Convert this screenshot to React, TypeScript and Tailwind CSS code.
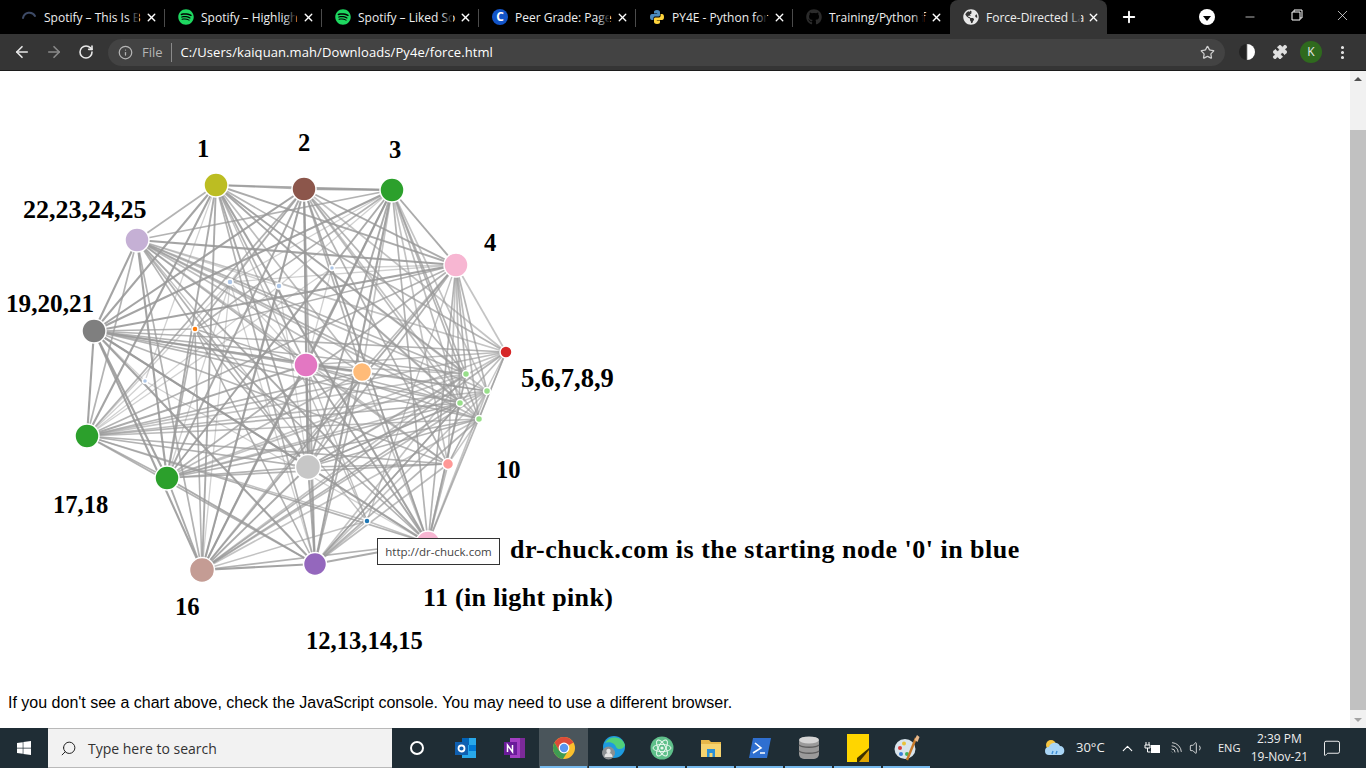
import { ArrowLeft, ArrowRight, RotateCw, Info, Star, Puzzle, MoreVertical, Plus, X, Minus, ChevronUp, Search, Wifi, Volume1, MessageSquare } from 'lucide-react';
import { FaSpotify, FaGithub, FaWindows, FaGlobeAmericas } from 'react-icons/fa';
import type { ReactNode } from 'react';

const nodes: [number, number, number, string][] = [
  [216, 185, 12, '#bcbd22'],
  [304, 189, 12, '#8c564b'],
  [392, 190, 12, '#2ca02c'],
  [456, 265, 12, '#f7b6d2'],
  [506, 352, 6, '#d62728'],
  [466, 374, 3.5, '#98df8a'],
  [487, 391, 3.5, '#98df8a'],
  [460, 403, 3.5, '#98df8a'],
  [479, 419, 3.5, '#98df8a'],
  [448, 464, 5.5, '#ff9896'],
  [428, 543, 12, '#f7b6d2'],
  [367, 521, 3, '#1f77b4'],
  [315, 564, 11.5, '#9467bd'],
  [202, 570, 12.5, '#c49c94'],
  [167, 478, 12, '#2ca02c'],
  [87, 436, 12, '#2ca02c'],
  [94, 331, 12, '#7f7f7f'],
  [137, 240, 12, '#c5b0d5'],
  [195, 329, 3, '#ff7f0e'],
  [230, 282, 3, '#aec7e8'],
  [279, 286, 3, '#aec7e8'],
  [332, 268, 2.5, '#aec7e8'],
  [145, 381, 2.5, '#aec7e8'],
  [306, 365, 12, '#e377c2'],
  [362, 372, 9.5, '#ffbb78'],
  [308, 467, 12.5, '#c7c7c7'],
];

// s = big hub, m = mid node with many lighter links, f = faint dot
const kinds = 'ssssmmmmmmsbssssssoffffsms';

const links: { a: number; b: number; w: number; o: number }[] = [];
nodes.forEach((_, i) => {
  nodes.forEach((_, j) => {
    if (j <= i) return;
    const pair = [kinds[i], kinds[j]].sort().join('');
    const h = (i * 31 + j * 17 + i * j * 7) % 11;
    if (pair === 'ss') {
      if (h < 10) links.push({ a: i, b: j, w: 1.7 + (h % 3) * 0.2, o: 0.75 + (h % 3) * 0.07 });
    } else if (pair === 'ms') {
      if (h < 10) links.push({ a: i, b: j, w: 1.7, o: 0.58 + (h % 3) * 0.07 });
    } else if (pair === 'mm') {
      if (h < 5) links.push({ a: i, b: j, w: 1.4, o: 0.55 });
    } else if (pair === 'os') {
      if (h < 9) links.push({ a: i, b: j, w: 1.6, o: 0.75 });
    } else if (pair === 'bs') {
      if (h < 7) links.push({ a: i, b: j, w: 1.4, o: 0.6 });
    } else if (pair === 'fs') {
      if (h < 4) links.push({ a: i, b: j, w: 1.3, o: 0.45 });
    }
  });
});

const labels: [number, number, string, string][] = [
  [197, 149, '1', 'text-[24.6px]'],
  [298, 143, '2', 'text-[24.6px]'],
  [389, 150, '3', 'text-[24.6px]'],
  [484, 243, '4', 'text-[24.6px]'],
  [521, 378, '5,6,7,8,9', 'text-[26.5px]'],
  [496, 470, '10', 'text-[24.6px]'],
  [423, 598, '11 (in light pink)', 'text-[26px] tracking-[0.33px]'],
  [306, 641, '12,13,14,15', 'text-[24.6px]'],
  [175, 607, '16', 'text-[24.6px]'],
  [53, 505, '17,18', 'text-[24.6px]'],
  [6, 304, '19,20,21', 'text-[25.2px]'],
  [23, 210, '22,23,24,25', 'text-[26px]'],
  [510, 550, "dr-chuck.com is the starting node '0' in blue", 'text-[26px] tracking-[0.5px]'],
];

function ChromeLogo({ size = 24 }: { size?: number }) {
  return (
    <svg width={size} height={size} viewBox="0 0 24 24">
      <circle cx="12" cy="12" r="11" fill="#fbc02d" />
      <path d="M12 12 L21.5 6.5 A11 11 0 0 0 2.5 6.5 L7.2 15 Z" fill="#dd4b39" />
      <path d="M12 12 L7.2 15 L2.5 6.5 A11 11 0 0 0 11 23 L16 15 Z" fill="#3f9b52" />
      <circle cx="12" cy="12" r="5.4" fill="#fff" />
      <circle cx="12" cy="12" r="4.2" fill="#5a95ee" />
    </svg>
  );
}

function PythonLogo() {
  return (
    <svg width="16" height="16" viewBox="0 0 16 16">
      <path d="M8 1C5.5 1 5 2 5 3v1.5h3.2V5H3C1.6 5 1 6.2 1 8s.7 3 2 3h1.4V9.2C4.4 8 5.3 7.4 6.4 7.4h3.2c.9 0 1.4-.6 1.4-1.4V3c0-1.2-1.3-2-3-2Z" fill="#4b8bbe" />
      <path d="M8 15c2.5 0 3-1 3-2v-1.5H7.8V11H13c1.400 0 2-1.200 2-3s-.7-3-2-3h-1.400v1.800c0 1.200-.9 1.800-2 1.800H6.400C5.500 8.600 5 9.200 5 10v3c0 1.200 1.300 2 3 2Z" fill="#ffd43b" />
    </svg>
  );
}

function Tab({ icon, title, sep = true, active = false }: { icon: ReactNode; title: string; sep?: boolean; active?: boolean }) {
  return (
    <div className={`relative flex h-[34px] w-[157px] shrink-0 items-center pl-[13px] pr-[7px] ${active ? 'rounded-t-lg bg-[#353535]' : ''}`}>
      <span className="flex w-[23px] shrink-0 items-center">{icon}</span>
      <span className="relative min-w-0 flex-1 whitespace-nowrap pt-px text-[12px] text-[#eeeeee]">
        {title}
        <span className={`absolute inset-y-0 right-0 w-3 bg-gradient-to-r from-transparent ${active ? 'to-[#353535]' : 'to-black'}`} />
      </span>
      <X size={13} strokeWidth={2.5} className="ml-[6px] shrink-0 text-white" />
      {sep && <span className="absolute right-0 top-[9px] h-[18px] w-px bg-[#4b4b4b]" />}
    </div>
  );
}

function CBadge() {
  return (
    <span className="flex h-4 w-4 items-center justify-center rounded-full bg-[#1254c8] text-[12px] font-bold leading-none text-white">
      C
    </span>
  );
}

function SpinnerIcon() {
  return (
    <svg width="16" height="16" viewBox="0 0 16 16" fill="none">
      <path d="M2 9 A6.5 6.5 0 0 1 14 7" stroke="#3d4a66" strokeWidth="2" strokeLinecap="round" />
    </svg>
  );
}

function TaskIcon({ children, run = true, active = false }: { children: ReactNode; run?: boolean; active?: boolean }) {
  return (
    <div className={`relative flex h-10 w-[49px] shrink-0 items-center justify-center ${active ? 'bg-[#4a555b]' : ''}`}>
      {children}
      {run && <span className="absolute inset-x-[1px] bottom-0 h-[2px] bg-[#76b9ed]" />}
    </div>
  );
}

function Taskbar() {
  return (
    <div className="flex h-10 shrink-0 items-center bg-[#1f2d35] text-white" style={{ fontFamily: '"Open Sans", sans-serif' }}>
      <div className="flex h-10 w-12 items-center justify-center">
        <FaWindows size={16} />
      </div>
      <div className="flex h-10 w-[344px] items-center border-y border-[#b9b9b9] bg-[#f2f2f2] pl-[12px] text-[14px] text-[#333]">
        <Search size={17} strokeWidth={1.4} className="-scale-x-100 text-[#222]" />
        <span className="ml-[11px]">Type here to search</span>
      </div>
      <TaskIcon run={false}>
        <span className="h-[14px] w-[14px] rounded-full border-2 border-white" />
      </TaskIcon>
      <TaskIcon run={false}>
        <svg width="24" height="24" viewBox="0 0 24 24">
          <rect x="8" y="2" width="14" height="20" fill="#28a8ea" />
          <rect x="8" y="2" width="7" height="7" fill="#0364b8" />
          <rect x="15" y="9" width="7" height="6" fill="#0078d4" />
          <rect x="1" y="6" width="13" height="13" fill="#0f5fb0" />
          <circle cx="7.5" cy="12.5" r="3" fill="none" stroke="#fff" strokeWidth="1.8" />
        </svg>
      </TaskIcon>
      <TaskIcon run={false}>
        <svg width="24" height="24" viewBox="0 0 24 24">
          <rect x="7" y="2" width="15" height="20" fill="#a33fc4" />
          <rect x="17" y="2" width="5" height="20" fill="#7c2a99" />
          <rect x="1" y="6" width="13" height="13" fill="#6a1b9a" />
          <path d="M4.5 16V9l5 7V9" fill="none" stroke="#fff" strokeWidth="1.5" />
        </svg>
      </TaskIcon>
      <TaskIcon active>
        <ChromeLogo />
      </TaskIcon>
      <TaskIcon>
        <svg width="26" height="26" viewBox="0 0 26 26">
          <circle cx="14" cy="12" r="11" fill="#1e9be0" />
          <path d="M5 8 A11 11 0 0 1 25 10 C24 15 17 15 16 12 C15 8 9 6 5 8Z" fill="#50d07a" />
          <circle cx="8.5" cy="18" r="6.5" fill="#8b8f92" />
          <circle cx="8.5" cy="16" r="2.2" fill="#e4e4e4" />
          <path d="M4.5 22 A4 4 0 0 1 12.5 22Z" fill="#e4e4e4" />
        </svg>
      </TaskIcon>
      <TaskIcon>
        <svg width="26" height="26" viewBox="0 0 26 26" fill="none">
          <circle cx="13" cy="13" r="11.5" fill="#5fbf8a" />
          <ellipse cx="13" cy="13" rx="9" ry="3.6" stroke="#e8f8ee" strokeWidth="1" transform="rotate(60 13 13)" />
          <ellipse cx="13" cy="13" rx="9" ry="3.6" stroke="#e8f8ee" strokeWidth="1" transform="rotate(-60 13 13)" />
          <ellipse cx="13" cy="13" rx="9" ry="3.6" stroke="#e8f8ee" strokeWidth="1" />
          <circle cx="13" cy="13" r="1.6" fill="#e8f8ee" />
        </svg>
      </TaskIcon>
      <TaskIcon>
        <svg width="24" height="24" viewBox="0 0 24 24">
          <path d="M2 4h8l2 2h10v15H2Z" fill="#e8b84a" />
          <rect x="2" y="8" width="20" height="13" fill="#f6d36f" />
          <rect x="8" y="13" width="8" height="8" fill="#2b8fd6" />
          <rect x="10.5" y="17" width="3" height="4" fill="#f6d36f" />
        </svg>
      </TaskIcon>
      <TaskIcon>
        <svg width="24" height="24" viewBox="0 0 24 24">
          <path d="M5 2h18l-4 20H1Z" fill="#2f6fd0" />
          <path d="M7 7l6 5-8 5M12 17h5" fill="none" stroke="#fff" strokeWidth="1.6" />
        </svg>
      </TaskIcon>
      <TaskIcon>
        <svg width="24" height="26" viewBox="0 0 24 26">
          <rect x="2" y="2" width="20" height="22" rx="5" fill="#9a9a9a" />
          <ellipse cx="12" cy="5" rx="10" ry="3.4" fill="#d4d4d4" />
          <path d="M2 10c3 3 17 3 20 0M2 16c3 3 17 3 20 0" fill="none" stroke="#5e5e5e" strokeWidth="1.4" />
        </svg>
      </TaskIcon>
      <TaskIcon>
        <svg width="22" height="28" viewBox="0 0 22 28">
          <rect width="22" height="28" fill="#ffd500" />
          <path d="M22 14v14H10V24Z" fill="#3b3000" />
          <path d="M22 16 12 28h10Z" fill="#e0a500" />
        </svg>
      </TaskIcon>
      <TaskIcon>
        <svg width="28" height="28" viewBox="0 0 28 28">
          <ellipse cx="12" cy="15" rx="10.5" ry="10" fill="#d8e4ec" />
          <circle cx="7" cy="14" r="2" fill="#d93a3a" />
          <circle cx="11" cy="9.5" r="2" fill="#e8c33a" />
          <circle cx="8" cy="20" r="2" fill="#3a7fd9" />
          <circle cx="14" cy="20" r="2" fill="#3fb35a" />
          <path d="M14 26 23 4" stroke="#c77a2a" strokeWidth="2.4" />
          <path d="M21.5 6 24 1l2.5 2-2 5Z" fill="#e8b88a" />
        </svg>
      </TaskIcon>
      <div className="ml-[115px] flex items-center">
        <svg width="22" height="20" viewBox="0 0 22 20" className="-ml-[2px]">
          <circle cx="7" cy="7" r="5" fill="#f5c542" />
          <path d="M5 17a4 4 0 0 1 0-8 6 6 0 0 1 11-1 4.6 4.6 0 0 1 1 9Z" fill="#a9d5f5" />
          <path d="M9 13l-1 3M13 13l-1 3" stroke="#3f8fd6" strokeWidth="1.4" />
        </svg>
        <span className="ml-[10px] w-[42px] text-[13px] text-[#eee]">30°C</span>
        <ChevronUp size={17} strokeWidth={1.6} className="ml-[1px]" />
        <svg width="17" height="14" viewBox="0 0 17 14" fill="none" className="ml-[8px]">
          <path d="M2 1v3M5 1v3M1 4h5v3H1ZM3.5 7v4h3" stroke="#fff" strokeWidth="1" />
          <rect x="7" y="4" width="9" height="8" fill="#fff" />
        </svg>
        <Wifi size={15} strokeWidth={1.4} className="ml-[7px] rotate-45 text-[#ddd]" />
        <Volume1 size={16} strokeWidth={1.3} className="ml-[6px] text-[#eee]" />
        <span className="ml-[13px] text-[11px] text-[#eee]">ENG</span>
        <div className="ml-[8px] flex w-[62px] flex-col items-center text-[12px] leading-[18px] text-[#eee]">
          <span>2:39 PM</span>
          <span>19-Nov-21</span>
        </div>
        <MessageSquare size={18} strokeWidth={1.2} className="ml-[13px]" />
      </div>
    </div>
  );
}

function Chrome() {
  return (
    <div className="shrink-0 bg-black" style={{ fontFamily: '"Open Sans", sans-serif' }}>
      <div className="flex h-[34px] items-center pl-[8px] text-white">
        <Tab icon={<SpinnerIcon />} title="Spotify – This Is B" />
        <Tab icon={<FaSpotify size={16} className="text-[#1ed760]" />} title="Spotify – Highligh" />
        <Tab icon={<FaSpotify size={16} className="text-[#1ed760]" />} title="Spotify – Liked So" />
        <Tab icon={<CBadge />} title="Peer Grade: Page" />
        <Tab icon={<PythonLogo />} title="PY4E - Python for" />
        <Tab icon={<FaGithub size={16} className="text-[#2b2b2b]" />} title="Training/Python f" sep={false} />
        <Tab icon={<FaGlobeAmericas size={16} className="text-[#e8e8e8]" />} title="Force-Directed La" sep={false} active />
        <Plus size={18} strokeWidth={2.5} className="ml-[13px]" />
        <span className="ml-[61px] flex h-4 w-4 items-center justify-center rounded-full bg-white">
          <span className="mt-[3px] border-x-[4px] border-t-[5px] border-x-transparent border-t-black" />
        </span>
        <Minus size={14} strokeWidth={1.2} className="ml-[28px]" />
        <svg width="12" height="12" viewBox="0 0 12 12" fill="none" stroke="#fff" className="ml-[34px] -mt-1">
          <path d="M3 3V1h8v8H9M1 3h8v8H1Z" />
        </svg>
        <X size={17} strokeWidth={1} className="ml-[31px] -mt-1" />
      </div>
      <div className="flex h-[37px] items-center border-b border-[#1c1c1c] bg-[#353535] text-[#e8e8e8]">
        <ArrowLeft size={18} strokeWidth={2.2} className="ml-[13px]" />
        <ArrowRight size={18} strokeWidth={2.2} className="ml-[14px] text-[#8a8a8a]" />
        <RotateCw size={16} strokeWidth={2.4} className="ml-[15px]" />
        <div className="ml-[14px] flex h-[27px] w-[1117px] items-center rounded-full bg-[#434343] pl-[10px] pr-[10px] text-[13px]">
          <Info size={15} className="text-[#b5b5b5]" />
          <span className="ml-[9px] pt-px text-[#b5b5b5]">File</span>
          <span className="ml-[8px] mr-[9px] h-[19px] w-px bg-[#8a8a8a]" />
          <span className="pt-px tracking-[0.09px] text-white">C:/Users/kaiquan.mah/Downloads/Py4e/force.html</span>
          <Star size={15} className="ml-auto text-[#cfcfcf]" />
        </div>
        <span className="ml-[14px] h-4 w-4 rounded-full bg-gradient-to-r from-[#222] from-45% to-white to-55%" />
        <Puzzle size={16} fill="#e0e0e0" strokeWidth={1} className="ml-[17px]" />
        <span className="ml-[12px] flex h-[22px] w-[22px] items-center justify-center rounded-full bg-[#2f6a1e] text-[12px]">K</span>
        <MoreVertical size={17} strokeWidth={2.4} className="ml-[12px]" />
      </div>
    </div>
  );
}

function Scrollbar() {
  return (
    <div className="flex w-4 shrink-0 flex-col items-center bg-[#f1f1f1]">
      <span className="mt-[6px] border-x-[4px] border-b-[4px] border-x-transparent border-b-[#505050]" />
      <div className="mt-[49px] h-[580px] w-full bg-[#c1c1c1]" />
      <span className="mt-[8px] border-x-[4px] border-t-[4px] border-x-transparent border-t-[#a3a3a3]" />
    </div>
  );
}

export default function App() {
  return (
    <div className="flex h-screen w-screen flex-col overflow-hidden bg-white">
      <Chrome />
      <div className="flex min-h-0 flex-1">
        <div className="min-w-0 flex-1">
          <div className="relative h-[623px]">
            <svg width="1000" height="622" viewBox="0 71 1000 622" className="block">
              {links.map((l) => (
                <line
                  key={`${l.a}-${l.b}`}
                  x1={nodes[l.a][0]}
                  y1={nodes[l.a][1]}
                  x2={nodes[l.b][0]}
                  y2={nodes[l.b][1]}
                  stroke="#999"
                  strokeWidth={l.w}
                  strokeOpacity={l.o}
                />
              ))}
              {nodes.map((n) => (
                <circle key={`${n[0]}-${n[1]}`} cx={n[0]} cy={n[1]} r={n[2]} fill={n[3]} stroke="#fff" strokeWidth="1.5" />
              ))}
            </svg>
            {labels.map(([x, y, t, size]) => (
              <span
                key={t}
                className={`absolute -translate-y-1/2 whitespace-nowrap font-bold leading-none text-black ${size}`}
                style={{ left: x, top: y - 71, fontFamily: '"Liberation Serif", serif' }}
              >
                {t}
              </span>
            ))}
            <div
              className="absolute left-[377px] top-[467px] flex h-[27px] w-[123px] items-center justify-center border border-[#333] bg-white text-[11.5px] text-[#444]"
              style={{ fontFamily: '"Open Sans", sans-serif' }}
            >
              http://dr-chuck.com
            </div>
          </div>
          <p className="pl-2 text-[16px] leading-[18px] text-black" style={{ fontFamily: '"Liberation Sans", sans-serif' }}>
            If you don't see a chart above, check the JavaScript console. You may need to use a different browser.
          </p>
        </div>
        <Scrollbar />
      </div>
      <Taskbar />
    </div>
  );
}
